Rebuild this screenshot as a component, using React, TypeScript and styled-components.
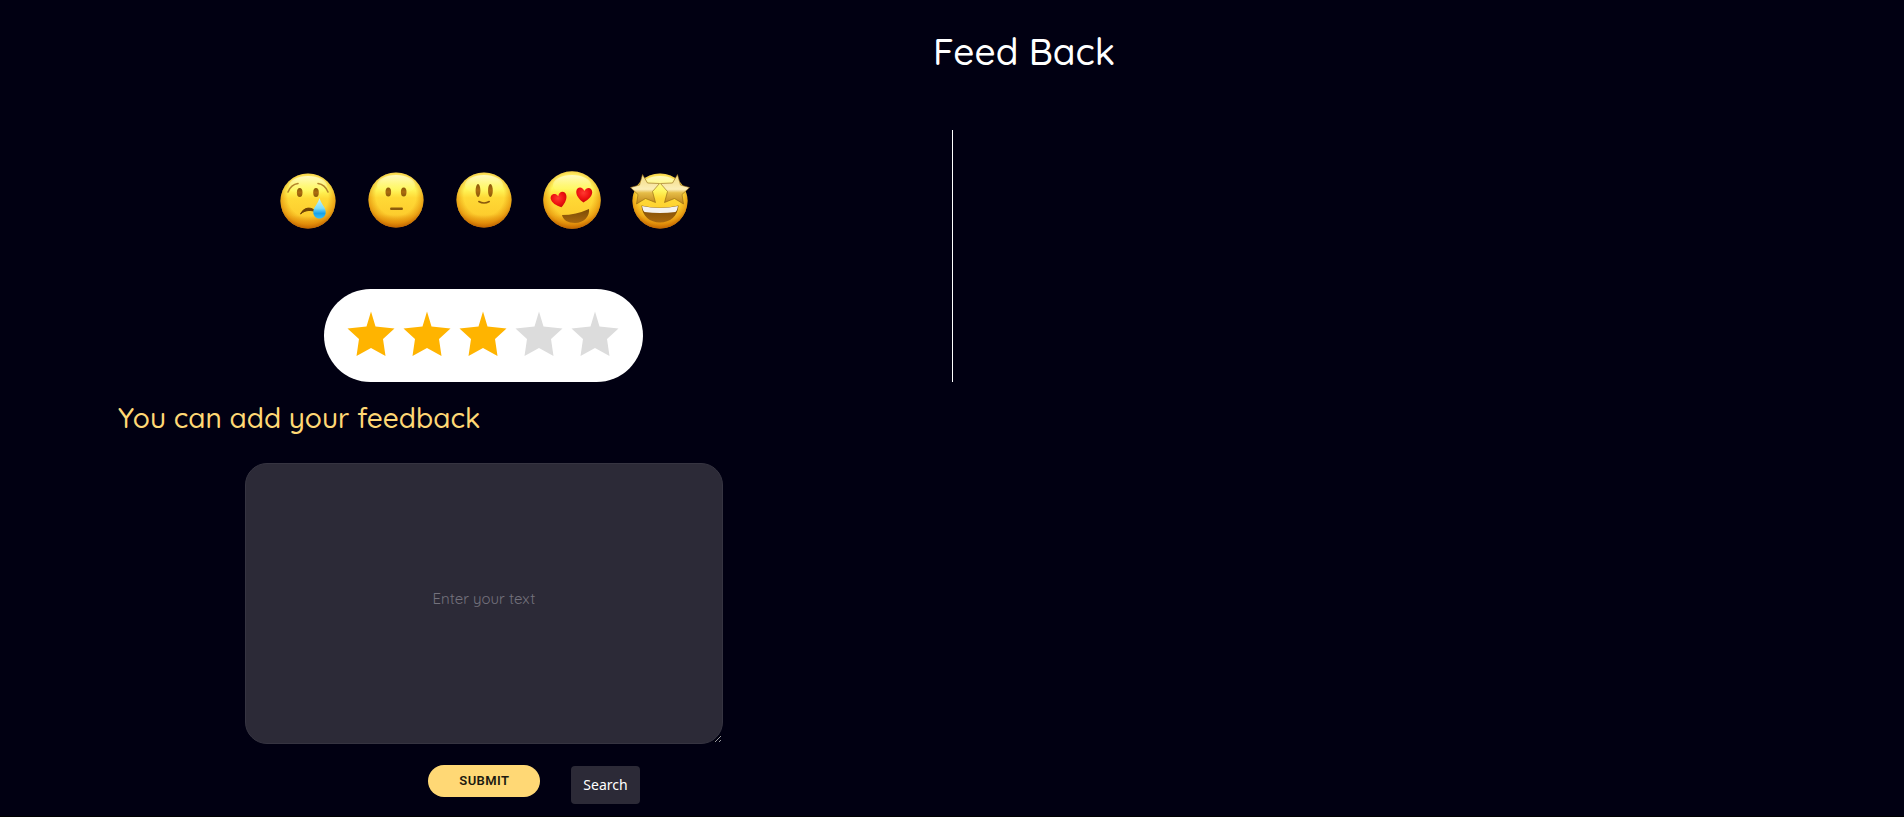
import React, { useState } from "react";
import styled, { createGlobalStyle } from "styled-components";

const Global = createGlobalStyle`
  * { box-sizing: border-box; }
  body {
    margin: 0;
    background: #010012;
    color: #fff;
    font-family: Quicksand, Lato, sans-serif;
  }
`;

const Page = styled.main`
  min-height: 100vh;
  padding: 23px 0 12px 16px;
  border-bottom: 1px solid #000;
`;

const Title = styled.h1`
  margin: 0 0 51px;
  padding-left: 128px;
  text-align: center;
  font-size: 37px;
  line-height: 56px;
  font-weight: 500;
`;

const Columns = styled.div`
  display: grid;
  grid-template-columns: 1fr 1fr;
  margin-left: -16px;
`;

const Rating = styled.section`
  display: flex;
  flex-direction: column;
  align-items: center;
  padding: 39px 0 0 15px;
`;

const Reviews = styled.section`
  border-left: 1px solid #fff;
`;

const Faces = styled.div`
  display: flex;
  gap: 28px;
  margin-bottom: 59px;
`;

const FaceButton = styled.button`
  width: 60px;
  height: 61px;
  padding: 0;
  border: 0;
  background: none;
  cursor: pointer;

  svg {
    display: block;
    width: 60px;
    height: 60px;
    overflow: visible;
  }
`;

const Stars = styled.div`
  display: flex;
  gap: 8px;
  padding: 22px 24px 25px 23px;
  border-radius: 47px;
  background: #fff;
`;

const StarButton = styled.button<{ $on: boolean }>`
  width: 48px;
  height: 46px;
  padding: 0;
  border: 0;
  background: none;
  color: ${(p) => (p.$on ? "#ffb400" : "#dcdcdc")};
  cursor: pointer;

  svg {
    display: block;
    width: 48px;
    height: 46px;
    fill: currentColor;
  }
`;

const Form = styled.form`
  width: calc(50% - 8px);
`;

const Prompt = styled.label`
  display: block;
  margin-left: 102px;
  padding: 18px 0 27px;
  color: #ffd875;
  font-size: 28px;
  font-weight: 500;
  line-height: 36px;
`;

const Message = styled.textarea`
  display: block;
  width: 51%;
  height: 281px;
  margin: 0 auto;
  padding: 125px 16px 16px;
  border: 1px solid #363441;
  border-radius: 22px;
  background: #2c2a37;
  color: #fff;
  font: 400 15px/20px Quicksand, Lato, sans-serif;
  text-align: center;

  &::placeholder {
    color: #74727d;
  }
`;

const Actions = styled.div`
  display: flex;
  align-items: flex-start;
  justify-content: center;
  gap: 31px;
  padding: 21px 0 0 100px;
`;

const Submit = styled.button`
  width: 112px;
  height: 32px;
  border: 0;
  border-radius: 16px;
  background: #ffd875;
  color: #1d1a10;
  font: 600 13px/16px Roboto, sans-serif;
  letter-spacing: 0.03em;
  cursor: pointer;
`;

const Search = styled.button`
  height: 38px;
  margin-top: 1px;
  padding: 0 12px;
  border: 0;
  border-radius: 4px;
  background: #2c2a37;
  color: #fff;
  font: 400 14px/20px "Noto Sans", sans-serif;
  cursor: pointer;
`;

const Defs = styled.svg`
  position: absolute;
  width: 0;
  height: 0;
`;

const FaceShades = () => (
  <Defs aria-hidden="true">
    <defs>
      <linearGradient id="skin" x1="0" y1="0" x2="0" y2="1">
        <stop offset="0" stopColor="#ffe65a" />
        <stop offset=".12" stopColor="#fff56a" />
        <stop offset=".3" stopColor="#fff85a" />
        <stop offset=".46" stopColor="#ffd936" />
        <stop offset=".76" stopColor="#fdcd2e" />
        <stop offset="1" stopColor="#e08a0c" />
      </linearGradient>
      <radialGradient id="rim" cx=".5" cy=".42" r=".59">
        <stop offset=".62" stopColor="#e08600" stopOpacity="0" />
        <stop offset=".84" stopColor="#dc8000" stopOpacity=".55" />
        <stop offset="1" stopColor="#b85c00" stopOpacity=".95" />
      </radialGradient>
      <linearGradient id="shine" x1="0" y1="0" x2="0" y2="1">
        <stop offset="0" stopColor="#fffde0" stopOpacity=".75" />
        <stop offset="1" stopColor="#fff86a" stopOpacity="0" />
      </linearGradient>
      <linearGradient id="eye" x1="0" y1="0" x2="0" y2="1">
        <stop offset="0" stopColor="#8a5a08" />
        <stop offset=".5" stopColor="#ad6c10" />
        <stop offset="1" stopColor="#8a5a08" />
      </linearGradient>
      <linearGradient id="tear" x1="0" y1="0" x2="0" y2="1">
        <stop offset="0" stopColor="#c9f4ff" />
        <stop offset=".5" stopColor="#7fdcf8" />
        <stop offset=".75" stopColor="#16a2ea" />
        <stop offset="1" stopColor="#3cc0f4" />
      </linearGradient>
      <radialGradient id="heart" cx=".45" cy=".35" r=".65">
        <stop offset="0" stopColor="#ff3a30" />
        <stop offset=".6" stopColor="#ee1111" />
        <stop offset="1" stopColor="#c50808" />
      </radialGradient>
      <linearGradient id="gold" x1="0" y1="0" x2="0" y2="1">
        <stop offset="0" stopColor="#f3dc84" />
        <stop offset=".3" stopColor="#f8e6a0" />
        <stop offset=".5" stopColor="#fbeeb8" />
        <stop offset=".62" stopColor="#e6bd48" />
        <stop offset="1" stopColor="#bd8418" />
      </linearGradient>
      <linearGradient id="mouth" x1="0" y1="0" x2="0" y2="1">
        <stop offset="0" stopColor="#7a4b06" />
        <stop offset="1" stopColor="#a8680e" />
      </linearGradient>
    </defs>
  </Defs>
);

const Head = ({ cy = 30, r = 27.5 }: { cy?: number; r?: number }) => (
  <>
    <circle cx="30" cy={cy} r={r} fill="url(#skin)" />
    <circle cx="30" cy={cy} r={r} fill="url(#rim)" />
    <ellipse cx="30" cy={cy - 15} rx="19" ry="10" fill="url(#shine)" />
  </>
);

const heartPath = "M0 7C-5 4-8 0-8-3.500C-8-8.500-2-9.500 0-4.500C2-9.500 8-8.500 8-3.500C8 0 5 4 0 7Z";
const starEye = "M12.500 4.500L17.500 13L29.500 13.500L22.500 21.500L25.500 32.500L15.500 28.500L6.500 34L8 24.500L.500 17.500L9.500 15Z";

const StarEye = () => (
  <path d={starEye} fill="url(#gold)" stroke="#8f6410" strokeOpacity=".6" strokeWidth="1" strokeLinejoin="round" />
);

const faces = [
  {
    name: "Crying",
    art: (
      <>
        <Head cy={31} />
        <ellipse cx="21.700" cy="22.500" rx="2.800" ry="4.500" fill="url(#eye)" />
        <ellipse cx="38" cy="22.500" rx="2.800" ry="4.500" fill="url(#eye)" />
        <path d="M10 22Q13 14.500 20 13.500M50 22Q47 14.500 40 13.500" fill="none" stroke="#b5852a" strokeWidth="1.600" strokeLinecap="round" />
        <path d="M22.500 44C26 36.500 34 36.500 38 42C33 39.500 27 40 22.500 44Z" fill="#704205" stroke="#704205" />
        <path d="M41.500 28C40 34 35.300 37 35.300 42C35.300 46 38 48.500 41.500 48.500S47.700 46 47.700 42C47.700 37 43 34 41.500 28Z" fill="url(#tear)" />
      </>
    ),
  },
  {
    name: "Neutral",
    art: (
      <>
        <Head />
        <ellipse cx="22.300" cy="22" rx="2.800" ry="4.500" fill="url(#eye)" />
        <ellipse cx="37.700" cy="22" rx="2.800" ry="4.500" fill="url(#eye)" />
        <rect x="24" y="37.500" width="13" height="2.400" rx="1.200" fill="#8b5a0c" />
      </>
    ),
  },
  {
    name: "Smiling",
    art: (
      <>
        <Head />
        <ellipse cx="24" cy="20.500" rx="2.400" ry="6.500" fill="url(#eye)" />
        <ellipse cx="36.400" cy="20.500" rx="2.400" ry="6.500" fill="url(#eye)" />
        <path d="M24.800 31.500Q30 34.500 35.300 31.500" fill="none" stroke="#8b5a0c" strokeWidth="1.500" strokeLinecap="round" />
      </>
    ),
  },
  {
    name: "In love",
    art: (
      <>
        <Head r={28.7} />
        <path d={heartPath} fill="url(#heart)" transform="translate(17.500 30.500) rotate(-16)" />
        <path d={heartPath} fill="url(#heart)" transform="translate(42 25.500) rotate(4)" />
        <path d="M20 45Q34 45 47 39C48 46 42 53 33 53C26 53 21 50 20 45Z" fill="url(#mouth)" />
      </>
    ),
  },
  {
    name: "Star struck",
    art: (
      <>
        <Head cy={31} />
        <path d="M11.500 35.500Q30 40 48.500 35.500C48 46 40 52.500 30 52.500S12 46 11.500 35.500Z" fill="url(#mouth)" />
        <path d="M12 36Q30 40 48 36Q47.500 40 45.500 42Q30 44 14.500 42Q12.500 40 12 36Z" fill="#f4f3f0" />
        <StarEye />
        <g transform="translate(60 0) scale(-1 1)">
          <StarEye />
        </g>
      </>
    ),
  },
];

export default function App() {
  const [stars, setStars] = useState(3);
  return (
    <>
      <Global />
      <FaceShades />
      <Page>
        <Title>Feed Back</Title>
        <Columns>
          <Rating>
            <Faces>
              {faces.map((f) => (
                <FaceButton key={f.name} type="button" aria-label={f.name}>
                  <svg viewBox="0 0 60 60">{f.art}</svg>
                </FaceButton>
              ))}
            </Faces>
            <Stars>
              {[1, 2, 3, 4, 5].map((n) => (
                <StarButton key={n} type="button" $on={n <= stars} aria-label={`${n} stars`} onClick={() => setStars(n)}>
                  <svg viewBox="0 0 48 46">
                    <path d="M24 .500L28.500 15.500L47.500 17.500L36 28L38.500 45L24 37L9.500 45L12 28L.500 17.500L19.500 15.500Z" />
                  </svg>
                </StarButton>
              ))}
            </Stars>
          </Rating>
          <Reviews />
        </Columns>
        <Form onSubmit={(e) => e.preventDefault()}>
          <Prompt htmlFor="message">You can add your feedback</Prompt>
          <Message id="message" placeholder="Enter your text" />
          <Actions>
            <Submit type="submit">SUBMIT</Submit>
            <Search type="button">Search</Search>
          </Actions>
        </Form>
      </Page>
    </>
  );
}
